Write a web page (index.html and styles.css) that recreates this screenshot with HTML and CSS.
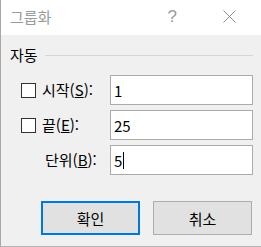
FILE: index.html
```html
<!DOCTYPE html>
<html lang="ko">
<head>
<meta charset="utf-8">
<link rel="stylesheet" href="styles.css">
</head>
<body>
<div class="dialog">
  <div class="titlebar">
    <span class="title">그룹화</span>
    <span class="help">?</span>
    <svg class="close" width="13" height="13" viewBox="0 0 13 13"><path d="M0.5 0.5 L12.5 12.5 M12.5 0.5 L0.5 12.5" stroke="#8c8c8c" stroke-width="1" fill="none"/></svg>
  </div>
  <div class="content">
    <div class="group-head"><span>자동</span><div class="rule"></div></div>
    <div class="row">
      <div class="check"></div>
      <span class="label">시작(<u>S</u>):</span>
      <div class="field">1</div>
    </div>
    <div class="row">
      <div class="check"></div>
      <span class="label">끝(<u>E</u>):</span>
      <div class="field">25</div>
    </div>
    <div class="row">
      <span class="label label-indent">단위(<u>B</u>):</span>
      <div class="field">5<span class="caret"></span></div>
    </div>
    <div class="buttons">
      <div class="btn btn-default">확인</div>
      <div class="btn">취소</div>
    </div>
  </div>
</div>
</body>
</html>
```
FILE: styles.css
```css
html, body {
  margin: 0;
  padding: 0;
}
body {
  width: 261px;
  height: 247px;
  background: #f0f0f0;
  font-family: "Noto Sans CJK KR", "Noto Sans", sans-serif;
  font-size: 15px;
  color: #000;
  overflow: hidden;
}
.dialog {
  box-sizing: border-box;
  width: 261px;
  height: 247px;
  border-left: 1px solid #a8a8a8;
  border-bottom: 1px solid #b4b4b4;
  display: flex;
  flex-direction: column;
}
.titlebar {
  height: 35px;
  background: #fff;
  display: flex;
  align-items: center;
  flex-shrink: 0;
}
.title {
  padding-left: 9px;
  color: #9a9a9a;
  line-height: 20px;
  margin-top: -2px;
}
.help {
  margin-left: 116px;
  color: #9a9a9a;
  font-family: "Liberation Sans", sans-serif;
  font-size: 17px;
  margin-top: -2px;
}
.close {
  margin-left: 46px;
  display: block;
  margin-top: -2px;
}
.content {
  flex: 1;
  display: flex;
  flex-direction: column;
  padding-top: 10px;
}
.group-head {
  display: flex;
  align-items: center;
  height: 20px;
  padding-left: 9px;
  padding-right: 8px;
  line-height: 20px;
}
.rule {
  flex: 1;
  height: 1px;
  background: #d5d5d5;
  margin-left: 7px;
  margin-top: 1px;
}
.row {
  display: flex;
  align-items: center;
  height: 30px;
  padding-left: 20px;
  padding-right: 8px;
  margin-top: 5px;
}
.group-head + .row {
  margin-top: 10px;
}
.check {
  box-sizing: border-box;
  width: 15px;
  height: 15px;
  border: 1px solid #333;
  background: #fff;
  margin-right: 6px;
}
.label {
  line-height: 20px;
}
.label-indent {
  padding-left: 24px;
}
.field {
  box-sizing: border-box;
  margin-left: auto;
  width: 143px;
  height: 30px;
  border: 1px solid #ababab;
  background: #fff;
  padding-left: 3px;
  line-height: 27px;
  display: flex;
  align-items: center;
}
.caret {
  display: inline-block;
  width: 1px;
  height: 17px;
  background: #000;
  margin-left: 1px;
}
.buttons {
  display: flex;
  gap: 13px;
  padding-left: 40px;
  margin-top: 26px;
}
.btn {
  box-sizing: border-box;
  width: 99px;
  height: 34px;
  background: #e1e1e1;
  border: 1px solid #adadad;
  display: flex;
  align-items: center;
  justify-content: center;
}
.btn-default {
  border: 2px solid #0078d7;
}
```
